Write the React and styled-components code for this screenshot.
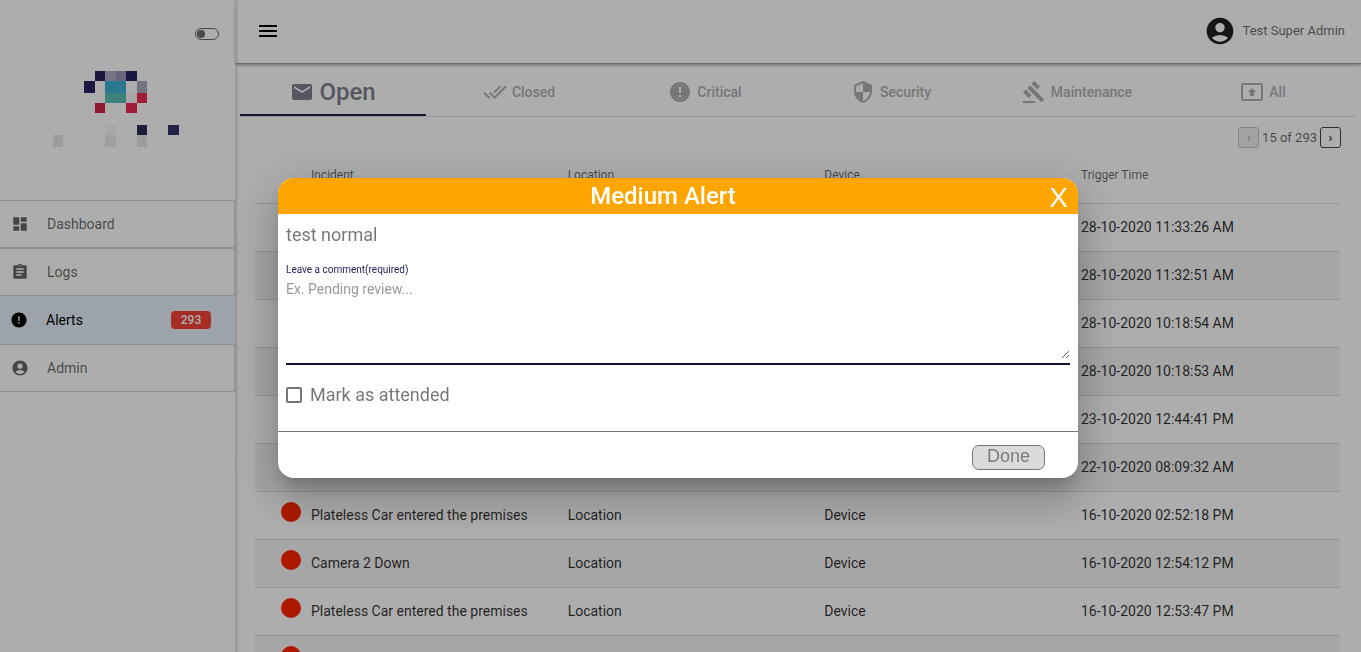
import React, { useState } from "react";
import styled, { createGlobalStyle, css } from "styled-components";
import {
  MdAccountCircle,
  MdAssignment,
  MdDashboard,
  MdDoneAll,
  MdEmail,
  MdError,
  MdGavel,
  MdMenu,
  MdPresentToAll,
  MdSecurity,
} from "react-icons/md";

const GlobalStyle = createGlobalStyle`
  *, *::before, *::after { box-sizing: border-box; }
  body {
    margin: 0;
    background: #fff;
    color: rgba(0, 0, 0, 0.82);
    font-family: Roboto, "Liberation Sans", sans-serif;
    font-size: 14px;
  }
`;

const Shell = styled.div`
  display: grid;
  grid-template-columns: 236px minmax(0, 1fr);
  height: 100vh;
  overflow: hidden;
`;

/* ---------- Sidebar ---------- */

const Sidebar = styled.aside`
  display: flex;
  flex-direction: column;
  border-right: 1px solid #e0e0e0;
  box-shadow: 0 0 3px rgba(0, 0, 0, 0.3);
  z-index: 1;
`;

const Brand = styled.div`
  display: flex;
  flex-direction: column;
  height: 200px;
  padding: 28px 16px 0 48px;
`;

const ThemeSwitch = styled.input`
  appearance: none;
  display: flex;
  align-items: center;
  align-self: flex-end;
  width: 24px;
  height: 12px;
  margin: 0;
  padding: 0 1px;
  border: 1px solid #6a6a6a;
  border-radius: 6px;
  &::before {
    content: "";
    width: 8px;
    height: 8px;
    border-radius: 50%;
    background: #6a6a6a;
  }
  &:checked {
    justify-content: flex-end;
  }
`;

const Logo = styled.svg`
  width: 132px;
  height: 77px;
  margin-top: 30px;
`;

const Nav = styled.nav`
  display: flex;
  flex-direction: column;
`;

const NavItem = styled.a`
  display: flex;
  align-items: center;
  height: 48px;
  padding: 0 24px 0 11px;
  gap: 18px;
  border: 1px solid #d3d3d3;
  border-left: 0;
  color: rgba(0, 0, 0, 0.6);
  font-size: 14px;
  text-decoration: none;
  svg {
    width: 18px;
    height: 18px;
    flex: none;
  }
  ${(p) =>
    p.$active &&
    css`
      padding-left: 10px;
      border: 0;
      background: #e8f1fb;
      color: #000;
    `}
`;

const Count = styled.span`
  width: 40px;
  margin-left: auto;
  border-radius: 4px;
  background: #f44336;
  color: #fff;
  font-size: 12px;
  font-weight: 500;
  line-height: 18px;
  text-align: center;
`;

/* ---------- Main column ---------- */

const Main = styled.main`
  min-width: 0;
`;

const TopBar = styled.header`
  display: flex;
  align-items: center;
  justify-content: space-between;
  height: 64px;
  padding: 0 16px 2px 20px;
  border-bottom: 1px solid #a0a0a0;
  box-shadow: 0 1px 3px rgba(0, 0, 0, 0.4);
`;

const MenuButton = styled.button`
  display: flex;
  padding: 0;
  border: 0;
  background: none;
  color: #000;
`;

const User = styled.div`
  display: flex;
  align-items: center;
  gap: 7px;
  color: rgba(0, 0, 0, 0.6);
  font-size: 13px;
  svg {
    color: #212121;
  }
`;

const Tabs = styled.div`
  display: grid;
  grid-template-columns: repeat(6, 1fr);
  margin: 0 5px 0 4px;
  border-bottom: 1px solid #dedede;
`;

const Tab = styled.button`
  display: flex;
  align-items: center;
  justify-content: center;
  gap: 5px;
  height: 52px;
  padding: 5px 0 0;
  border: 0;
  border-bottom: 2px solid ${(p) => (p.$active ? "#23234f" : "transparent")};
  background: none;
  color: ${(p) => (p.$active ? "#7f7f8e" : "#b0b0b0")};
  font-family: inherit;
  font-size: ${(p) => (p.$active ? 24 : 14)}px;
  font-weight: 500;
`;

const Content = styled.section`
  padding: 10px 21px 0 19px;
`;

const Pager = styled.div`
  display: flex;
  align-items: center;
  justify-content: flex-end;
  gap: 3px;
  margin-right: -1px;
  color: rgba(0, 0, 0, 0.6);
  font-size: 13px;
`;

const PagerButton = styled.button`
  width: 21px;
  height: 21px;
  padding: 0;
  border: 1px solid #444;
  border-radius: 3px;
  background: #fff;
  color: #000;
  font-family: inherit;
  font-size: 13px;
  line-height: 19px;
  &:disabled {
    border-color: #c4c4c4;
    background: #efefef;
    color: #a0a0a0;
  }
`;

const Table = styled.table`
  width: 100%;
  table-layout: fixed;
  border-collapse: collapse;
`;

const HeadCell = styled.th`
  width: ${(p) => p.$width || "auto"};
  height: 55px;
  padding: 0 0 1px;
  border-bottom: 1px solid #e0e0e0;
  color: rgba(0, 0, 0, 0.6);
  font-size: 12px;
  font-weight: 400;
  text-align: left;
`;

const Row = styled.tr`
  height: 48px;
  &:nth-child(even) {
    background: #f5f5f5;
  }
`;

const Cell = styled.td`
  padding: 0;
  border-bottom: 1px solid #dbdbdb;
`;

const DotCell = styled(Cell)`
  padding: 10px 0 0 26px;
  vertical-align: top;
`;

const Dot = styled.span`
  display: block;
  width: 20px;
  height: 20px;
  border-radius: 50%;
  background: ${(p) => p.$color};
`;

/* ---------- Dialog ---------- */

const Backdrop = styled.div`
  position: fixed;
  inset: 0;
  z-index: 10;
  display: flex;
  align-items: center;
  justify-content: center;
  padding: 4px 5px 0 0;
  background: rgba(0, 0, 0, 0.32);
`;

const Dialog = styled.div`
  width: 800px;
  max-width: 90vw;
  overflow: hidden;
  border-radius: 16px;
  background: #fff;
  color: rgba(0, 0, 0, 0.54);
  font-size: 18px;
  box-shadow: 0 11px 15px -7px rgba(0, 0, 0, 0.2),
    0 24px 38px 3px rgba(0, 0, 0, 0.14), 0 9px 46px 8px rgba(0, 0, 0, 0.12);
`;

const DialogHeader = styled.div`
  display: grid;
  grid-template-columns: 1fr 30px;
  align-items: center;
  height: 36px;
  padding: 0 10px;
  background: #ffa500;
  color: #fff;
`;

const DialogTitle = styled.h2`
  margin: 0;
  font-size: 24px;
  font-weight: 500;
  line-height: 36px;
  text-align: center;
`;

const CloseButton = styled.button`
  justify-self: end;
  padding: 4px 0 0;
  border: 0;
  background: none;
  color: #fff;
  font-family: "Liberation Sans", Arial, sans-serif;
  font-size: 28px;
  line-height: 32px;
`;

const DialogBody = styled.div`
  padding: 8px 8px 23px;
`;

const Message = styled.p`
  margin: 0;
  line-height: 26px;
`;

const Field = styled.div`
  display: flex;
  flex-direction: column;
  margin-top: 16px;
  padding-bottom: 4px;
  border-bottom: 2px solid #14142f;
`;

const FieldLabel = styled.label`
  color: #23235b;
  font-size: 10px;
  line-height: 12px;
`;

const Comment = styled.textarea`
  height: 83px;
  padding: 5px 0 0;
  border: 0;
  outline: 0;
  background: none;
  color: inherit;
  font-family: inherit;
  font-size: 14px;
  line-height: 16px;
  resize: vertical;
  &::placeholder {
    color: rgba(0, 0, 0, 0.42);
  }
`;

const CheckLabel = styled.label`
  display: flex;
  align-items: center;
  gap: 8px;
  margin-top: 17px;
  line-height: 26px;
`;

const CheckBox = styled.input`
  appearance: none;
  width: 16px;
  height: 16px;
  margin: 0;
  border: 2px solid #757575;
  border-radius: 2px;
  &:checked {
    background: #757575;
  }
`;

const DialogFooter = styled.div`
  display: flex;
  align-items: flex-start;
  justify-content: flex-end;
  height: 47px;
  padding: 13px 33px 0;
  border-top: 1px solid #757575;
`;

const DoneButton = styled.button`
  width: 73px;
  height: 25px;
  padding: 0 0 2px;
  border: 1px solid #757575;
  border-radius: 7px;
  background: #dbdbdb;
  color: #7b7b7b;
  font-family: "Liberation Sans", Arial, sans-serif;
  font-size: 18px;
  line-height: 21px;
`;

const NAV = [
  { label: "Dashboard", Icon: MdDashboard },
  { label: "Logs", Icon: MdAssignment },
  { label: "Alerts", Icon: MdError, active: true, count: 293 },
  { label: "Admin", Icon: MdAccountCircle },
];

const TABS = [
  { label: "Open", Icon: MdEmail, active: true },
  { label: "Closed", Icon: MdDoneAll },
  { label: "Critical", Icon: MdError },
  { label: "Security", Icon: MdSecurity },
  { label: "Maintenance", Icon: MdGavel },
  { label: "All", Icon: MdPresentToAll },
];

const MEDIUM = "#ffa500";
const CRITICAL = "#ff2600";

const ALERTS = [
  { color: MEDIUM, time: "28-10-2020 11:33:26 AM" },
  { color: MEDIUM, time: "28-10-2020 11:32:51 AM" },
  { color: MEDIUM, time: "28-10-2020 10:18:54 AM" },
  { color: MEDIUM, time: "28-10-2020 10:18:53 AM" },
  { color: MEDIUM, time: "23-10-2020 12:44:41 PM" },
  { color: MEDIUM, time: "22-10-2020 08:09:32 AM" },
  { color: CRITICAL, incident: "Plateless Car entered the premises", time: "16-10-2020 02:52:18 PM" },
  { color: CRITICAL, incident: "Camera 2 Down", time: "16-10-2020 12:54:12 PM" },
  { color: CRITICAL, incident: "Plateless Car entered the premises", time: "16-10-2020 12:53:47 PM" },
  { color: CRITICAL },
];

/* x, y, width, height, fill */
const LOGO_BLOCKS = [
  [47, 1, 11, 10, "#27235f"],
  [57, 1, 11, 10, "#adadc4"],
  [68, 1, 10, 10, "#9895b4"],
  [78, 1, 11, 10, "#27235f"],
  [36, 11, 11, 12, "#27235f"],
  [57, 11, 21, 12, "#3bb1d4"],
  [89, 11, 10, 12, "#acacc0"],
  [57, 23, 21, 10, "#5abdb7"],
  [78, 23, 11, 10, "#fdf5f7"],
  [89, 23, 10, 10, "#ec2a52"],
  [47, 33, 10, 10, "#d8224a"],
  [78, 33, 11, 10, "#ec2a52"],
  [57, 55, 11, 10, "#f6f6f6"],
  [89, 55, 10, 10, "#2d2b58"],
  [120, 55, 11, 10, "#36336a"],
  [5, 65, 10, 12, "#e6e6ea"],
  [57, 65, 11, 12, "#ebebed"],
  [89, 65, 10, 12, "#e6e6ea"],
];

export default function App() {
  const [open, setOpen] = useState(true);
  const close = () => setOpen(false);

  return (
    <>
      <GlobalStyle />
      <Shell>
        <Sidebar>
          <Brand>
            <ThemeSwitch type="checkbox" role="switch" aria-label="Pin sidebar" />
            <Logo viewBox="0 0 132 77" shapeRendering="crispEdges" aria-hidden="true">
              {LOGO_BLOCKS.map(([x, y, w, h, fill]) => (
                <rect key={`${x}-${y}`} x={x} y={y} width={w} height={h} fill={fill} />
              ))}
            </Logo>
          </Brand>
          <Nav>
            {NAV.map(({ label, Icon, active, count }) => (
              <NavItem key={label} href="#" $active={active}>
                <Icon />
                {label}
                {count && <Count>{count}</Count>}
              </NavItem>
            ))}
          </Nav>
        </Sidebar>

        <Main>
          <TopBar>
            <MenuButton type="button" aria-label="Toggle menu">
              <MdMenu size={24} />
            </MenuButton>
            <User>
              <MdAccountCircle size={32} />
              Test Super Admin
            </User>
          </TopBar>

          <Tabs role="tablist">
            {TABS.map(({ label, Icon, active }) => (
              <Tab key={label} type="button" role="tab" aria-selected={!!active} $active={active}>
                <Icon size={24} />
                {label}
              </Tab>
            ))}
          </Tabs>

          <Content>
            <Pager>
              <PagerButton type="button" disabled aria-label="Previous page">‹</PagerButton>
              15 of 293
              <PagerButton type="button" aria-label="Next page">›</PagerButton>
            </Pager>
            <Table>
              <thead>
                <tr>
                  <HeadCell $width="56px" />
                  <HeadCell>Incident</HeadCell>
                  <HeadCell>Location</HeadCell>
                  <HeadCell>Device</HeadCell>
                  <HeadCell $width="259px">Trigger Time</HeadCell>
                </tr>
              </thead>
              <tbody>
                {ALERTS.map(({ color, incident, time }, i) => (
                  <Row key={i}>
                    <DotCell>
                      <Dot $color={color} />
                    </DotCell>
                    <Cell>{incident}</Cell>
                    <Cell>{incident && "Location"}</Cell>
                    <Cell>{incident && "Device"}</Cell>
                    <Cell>{time}</Cell>
                  </Row>
                ))}
              </tbody>
            </Table>
          </Content>
        </Main>
      </Shell>

      {open && (
        <Backdrop>
          <Dialog role="dialog" aria-modal="true" aria-labelledby="dialog-title">
            <DialogHeader>
              <DialogTitle id="dialog-title">Medium Alert</DialogTitle>
              <CloseButton type="button" aria-label="Close" onClick={close}>X</CloseButton>
            </DialogHeader>
            <DialogBody>
              <Message>test normal</Message>
              <Field>
                <FieldLabel htmlFor="comment">Leave a comment(required)</FieldLabel>
                <Comment id="comment" placeholder="Ex. Pending review..." />
              </Field>
              <CheckLabel>
                <CheckBox type="checkbox" />
                Mark as attended
              </CheckLabel>
            </DialogBody>
            <DialogFooter>
              <DoneButton type="button" onClick={close}>Done</DoneButton>
            </DialogFooter>
          </Dialog>
        </Backdrop>
      )}
    </>
  );
}
